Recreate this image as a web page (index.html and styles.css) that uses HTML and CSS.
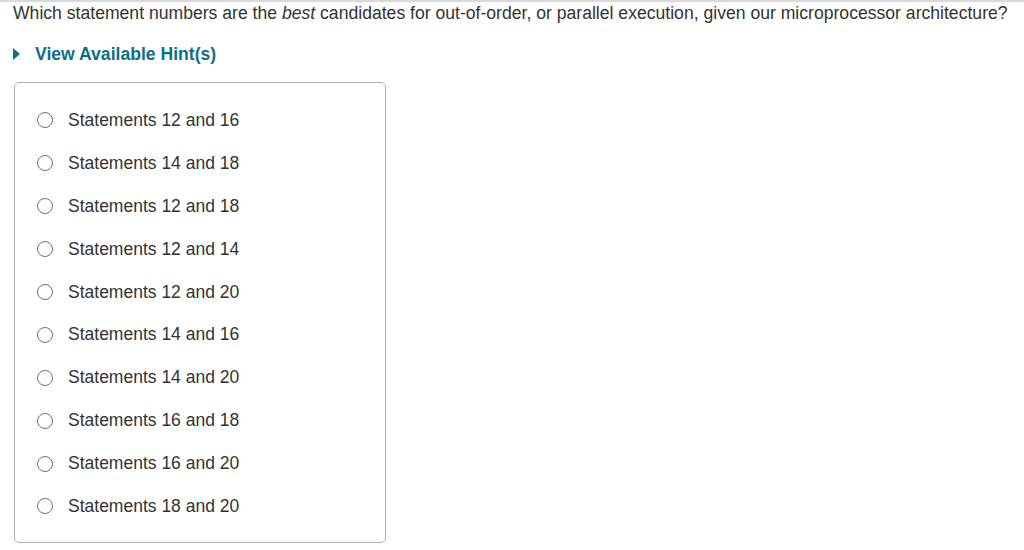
FILE: index.html
```html
<!DOCTYPE html>
<html>
<head>
<meta charset="utf-8">
<link rel="stylesheet" href="styles.css">
</head>
<body>
<div class="page">
  <p class="question">Which statement numbers are the <em>best</em> candidates for out-of-order, or parallel execution, given our microprocessor architecture?</p>
  <div class="hint">
    <svg class="caret" width="7" height="12" viewBox="0 0 7 12"><polygon points="0,0 7,6 0,12" fill="#0b6f8c"/></svg>
    <span>View Available Hint(s)</span>
  </div>
  <div class="options">
    <label class="option"><span class="radio"></span><span>Statements 12 and 16</span></label>
    <label class="option"><span class="radio"></span><span>Statements 14 and 18</span></label>
    <label class="option"><span class="radio"></span><span>Statements 12 and 18</span></label>
    <label class="option"><span class="radio"></span><span>Statements 12 and 14</span></label>
    <label class="option"><span class="radio"></span><span>Statements 12 and 20</span></label>
    <label class="option"><span class="radio"></span><span>Statements 14 and 16</span></label>
    <label class="option"><span class="radio"></span><span>Statements 14 and 20</span></label>
    <label class="option"><span class="radio"></span><span>Statements 16 and 18</span></label>
    <label class="option"><span class="radio"></span><span>Statements 16 and 20</span></label>
    <label class="option"><span class="radio"></span><span>Statements 18 and 20</span></label>
  </div>
</div>
</body>
</html>
```
FILE: styles.css
```css
html, body {
  margin: 0;
  padding: 0;
  background: #fff;
}
body {
  font-family: "Liberation Sans", Arial, sans-serif;
  color: #333;
}
.page {
  border-top: 2px solid #d9d9d9;
  padding: 0 0 0 13px;
}
.question {
  margin: 0;
  padding-top: 0;
  font-size: 17.6px;
  line-height: 22px;
  color: #333;
}
.question em {
  font-style: italic;
}
.hint {
  display: flex;
  align-items: center;
  gap: 15px;
  margin-top: 19px;
  height: 22px;
  font-size: 17.6px;
  font-weight: bold;
  color: #0b6f8c;
}
.caret {
  display: block;
}
.options {
  margin-top: 17px;
  margin-left: 1px;
  width: 370px;
  border: 1px solid #b3b3b3;
  border-radius: 5px;
  padding: 16px 0 14px 0;
  display: flex;
  flex-direction: column;
}
.option {
  display: flex;
  align-items: center;
  height: 42.9px;
  padding-left: 22px;
  gap: 15px;
  font-size: 17.5px;
  color: #333;
}
.radio {
  width: 14px;
  height: 14px;
  border: 1px solid #707070;
  border-radius: 50%;
  flex: none;
}
```
